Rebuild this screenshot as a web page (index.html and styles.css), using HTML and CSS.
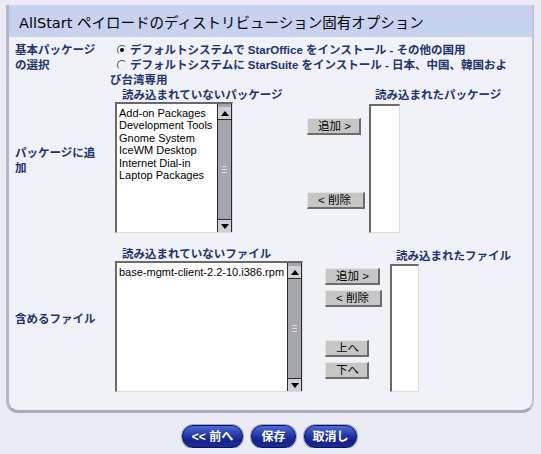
FILE: index.html
```html
<!DOCTYPE html>
<html lang="ja">
<head>
<meta charset="utf-8">
<title>AllStart</title>
<link rel="stylesheet" href="styles.css">
</head>
<body>
<div class="frame">
  <div class="titlebar"><h1>AllStart ペイロードのディストリビューション固有オプション</h1></div>
  <div class="content">
    <div class="row">
      <div class="label">基本パッケージの選択</div>
      <div class="radios">
        <label class="radio"><span class="rb checked"></span>デフォルトシステムで StarOffice をインストール - その他の国用</label>
        <label class="radio"><span class="rb"></span>デフォルトシステムに StarSuite をインストール - 日本、中国、韓国および台湾専用</label>
      </div>
    </div>

    <div class="row row-list">
      <div class="label">パッケージに追加</div>
      <div class="col-src pk">
        <div class="lhead">読み込まれていないパッケージ</div>
        <div class="listbox pk-src">
          <div class="items">
            <div>Add-on Packages</div>
            <div>Development Tools</div>
            <div>Gnome System</div>
            <div>IceWM Desktop</div>
            <div>Internet Dial-in</div>
            <div>Laptop Packages</div>
          </div>
          <div class="sb"><span class="arrow up"></span><span class="grip"></span><span class="arrow down"></span></div>
        </div>
      </div>
      <div class="col-btns pk-btns">
        <button class="btn w54">追加 &gt;</button>
        <button class="btn w58 gap-del">&lt; 削除</button>
      </div>
      <div class="col-dst">
        <div class="lhead dst">読み込まれたパッケージ</div>
        <div class="listbox pk-dst"></div>
      </div>
    </div>

    <div class="row row-list files">
      <div class="label">含めるファイル</div>
      <div class="col-src fl">
        <div class="lhead">読み込まれていないファイル</div>
        <div class="listbox fl-src">
          <div class="items">
            <div>base-mgmt-client-2.2-10.i386.rpm</div>
          </div>
          <div class="sb"><span class="arrow up"></span><span class="grip"></span><span class="arrow down"></span></div>
        </div>
      </div>
      <div class="col-btns fl-btns">
        <button class="btn w55">追加 &gt;</button>
        <button class="btn w57 g5">&lt; 削除</button>
        <button class="btn w44 g33">上へ</button>
        <button class="btn w44 g5">下へ</button>
      </div>
      <div class="col-dst fl-dcol">
        <div class="lhead dst">読み込まれたファイル</div>
        <div class="listbox fl-dst"></div>
      </div>
    </div>
  </div>
</div>
<div class="nav">
  <button class="nbtn n-prev">&lt;&lt; 前へ</button>
  <button class="nbtn n-save">保存</button>
  <button class="nbtn n-cancel">取消し</button>
</div>
</body>
</html>
```

FILE: styles.css
```css
* { box-sizing: border-box; }

body {
  margin: 0;
  background: #eaebf5;
  font-family: "Liberation Sans", "Noto Sans CJK JP", sans-serif;
  font-size: 11.5px;
}

.frame {
  margin: 5px 0 0 6px;
  width: 528px;
  background: #f0f1f9;
  border-left: 3px solid #b2b6c6;
  border-right: 2px solid #c0c3d0;
  border-bottom: 3px solid #a8acba;
  border-radius: 0 0 12px 12px;
}

.titlebar {
  height: 32px;
  background: #c7d2ee;
  padding: 10px 0 0 10px;
}

.titlebar h1 {
  margin: 0;
  font-family: "DejaVu Sans", "Noto Sans CJK JP", sans-serif;
  font-size: 14.5px;
  font-weight: normal;
  line-height: 17px;
  color: #000;
  white-space: nowrap;
}

.content {
  padding: 6px 0 18px 6px;
}

.row {
  display: flex;
}

.label {
  width: 95px;
  padding-right: 6px;
  font-weight: bold;
  color: #22336e;
  line-height: 15px;
}

.row-list .label {
  align-self: center;
}

.radios {
  width: 400px;
  line-height: 15px;
  font-weight: bold;
  color: #22336e;
}

.radio {
  display: block;
}

.rb {
  display: inline-block;
  width: 10px;
  height: 10px;
  margin: 0 3px 0 7px;
  vertical-align: -1px;
  border-radius: 50%;
  border-top: 1px solid #555;
  border-left: 1px solid #555;
  border-right: 1px solid #e4e4ea;
  border-bottom: 1px solid #e4e4ea;
  position: relative;
}

.rb.checked::after {
  content: "";
  position: absolute;
  left: 2px;
  top: 2px;
  width: 4px;
  height: 4px;
  border-radius: 50%;
  background: #000;
}

.lhead {
  padding-left: 12px;
  line-height: 14px;
  white-space: nowrap;
  font-weight: bold;
  color: #22336e;
}

.lhead.dst {
  padding-left: 6px;
}

.listbox {
  display: flex;
  background: #fff;
  border-top: 2px solid #6a6a6a;
  border-left: 2px solid #6a6a6a;
  border-right: 1px solid #dcdcdc;
  border-bottom: 1px solid #dcdcdc;
}

.col-src.pk { width: 197px; }
.col-src.fl { width: 215px; }

.pk-src {
  margin-left: 5px;
  width: 118px;
  height: 131px;
}

.fl-src {
  margin-left: 5px;
  width: 188px;
  height: 131px;
}

.items {
  flex: 1;
  padding: 3px 0 0 2px;
  font-family: "Liberation Sans", sans-serif;
  font-size: 11px;
  line-height: 12.4px;
  color: #000;
  white-space: nowrap;
  overflow: hidden;
}

.sb {
  width: 15px;
  display: flex;
  flex-direction: column;
  justify-content: space-between;
  align-items: stretch;
  background: #a6a6ae;
  border-left: 1px solid #2a2a2a;
  border-right: 1px solid #2a2a2a;
}

.arrow {
  display: block;
  height: 13px;
  background: #cfcfd4;
  position: relative;
}

.arrow.up { border-bottom: 1px solid #2a2a2a; margin-top: 3px; }
.arrow.down { border-top: 1px solid #2a2a2a; }

.arrow::after {
  content: "";
  position: absolute;
  left: 3px;
  top: 4px;
  border-left: 4px solid transparent;
  border-right: 4px solid transparent;
}

.arrow.up::after { border-bottom: 5px solid #000; }
.arrow.down::after { border-top: 5px solid #000; }

.grip {
  display: block;
  height: 7px;
  margin: 0 4px;
  border-top: 1px solid #dcdce2;
  border-bottom: 1px solid #dcdce2;
  background: linear-gradient(#a6a6ae 2px, #dcdce2 2px, #dcdce2 3px, #a6a6ae 3px);
}

.col-btns {
  display: flex;
  flex-direction: column;
  align-items: flex-start;
}

.pk-btns { width: 62px; padding-top: 30px; }
.fl-btns { width: 65px; padding-top: 21px; }

.btn {
  display: block;
  height: 17px;
  padding: 0 0 0 10px;
  margin: 0;
  text-align: left;
  background: #c6c6c6;
  border-style: solid;
  border-width: 1px 2px 2px 1px;
  border-color: #e6e6e6 #6c6c6c #6c6c6c #e6e6e6;
  font-family: "Liberation Sans", "Noto Sans CJK JP", sans-serif;
  font-size: 11.5px;
  line-height: 13px;
  color: #000;
}

.w54 { width: 54px; }
.w55 { width: 55px; }
.w57 { width: 57px; }
.w58 { width: 58px; }
.w44 { width: 44px; }

.gap-del { margin-top: 57px; }
.g5 { margin-top: 5px; }
.g33 { margin-top: 33px; }

.pk-dst {
  margin-top: 2px;
  width: 31px;
  height: 129px;
}

.files {
  margin-top: 14px;
}

.fl-dcol { padding-top: 2px; }

.fl-dst {
  margin-top: 1px;
  width: 29px;
  height: 128px;
}

.nav {
  display: flex;
  justify-content: center;
  gap: 8px;
  margin-top: 12px;
  padding-right: 2px;
}

.nbtn {
  height: 23px;
  padding: 0;
  border-radius: 11px;
  border: 1px solid #0b1450;
  background: linear-gradient(#4d6bd6, #2237a8 45%, #16238a 70%, #1b2c98);
  box-shadow: 0 0 0 1px #9aa6d6;
  color: #fff;
  font-family: "Liberation Sans", "Noto Sans CJK JP", sans-serif;
  font-weight: bold;
  font-size: 12px;
  line-height: 20px;
}

.n-prev { width: 61px; }
.n-save { width: 45px; }
.n-cancel { width: 53px; }
```
